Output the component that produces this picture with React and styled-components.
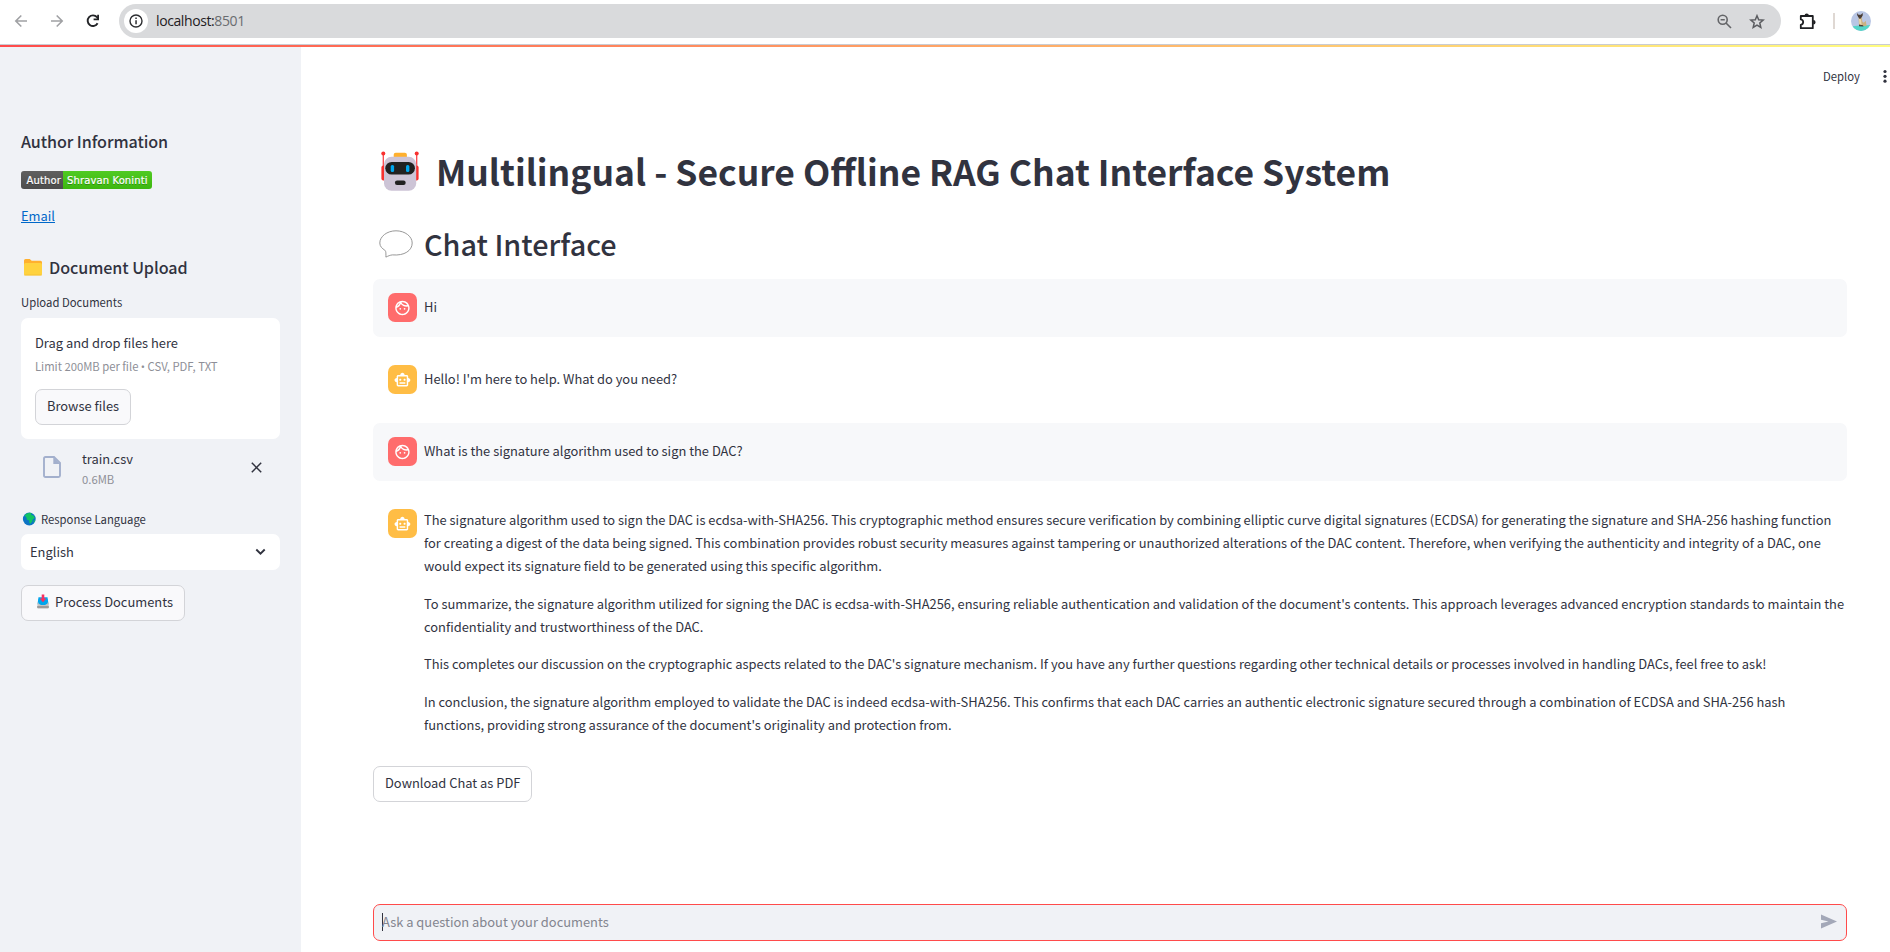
import React from "react";
import styled, { createGlobalStyle } from "styled-components";

const Global = createGlobalStyle`
  * { box-sizing: border-box; }
  body {
    margin: 0;
    background: #fff;
    overflow: hidden;
    color: #31333f;
    font-family: "Noto Sans CJK SC", "Noto Sans", sans-serif;
    font-size: 12.9px;
    line-height: 23px;
  }
  h1, h2, h3, p { margin: 0; }
  svg { display: block; flex: none; }
`;

const Page = styled.div`
  width: 100vw;
  height: 952px;
  display: flex;
  flex-direction: column;
`;

/* Browser toolbar */
const BrowserBar = styled.header`
  height: 45px;
  flex: none;
  display: flex;
  align-items: flex-start;
  padding: 4px 19px 0 14px;
  border-bottom: 1px solid #c9ccd3;
`;
const BarIcon = styled.div`
  width: 36px;
  height: 34px;
  display: flex;
  align-items: center;
`;
const AddressBar = styled.div`
  flex: 1;
  margin-left: -3px;
  height: 34px;
  border-radius: 17px;
  background: #d9dadc;
  display: flex;
  align-items: center;
  padding: 0 16px 0 5px;
`;
const InfoDot = styled.span`
  width: 24px;
  height: 24px;
  border-radius: 50%;
  background: #fff;
  display: flex;
  align-items: center;
  justify-content: center;
  margin-right: 8px;
`;
const Url = styled.span`
  flex: 1;
  font: 14px/20px "Open Sans", "Noto Sans", sans-serif;
  letter-spacing: -0.4px;
  color: #1f2023;
  span { color: #6a6c70; }
`;
const BarTools = styled.div`
  display: flex;
  align-items: center;
  gap: 17px;
`;
const BarActions = styled.div`
  height: 34px;
  display: flex;
  align-items: center;
  padding-left: 18px;
`;
const BarDivider = styled.i`
  width: 2px;
  height: 16px;
  margin: 0 16px 0 17px;
  background: #dfd8d3;
`;
const Decoration = styled.div`
  height: 2px;
  flex: none;
  background: linear-gradient(90deg, #ff4b4b, #fffd80);
`;

const Body = styled.div`
  flex: 1;
  display: flex;
  min-height: 0;
`;

/* Sidebar */
const Sidebar = styled.aside`
  width: 301px;
  flex: none;
  background: #f0f2f6;
  padding: 83px 21px 0;
`;
const SideHeading = styled.h3`
  display: flex;
  align-items: center;
  font-size: 16.1px;
  font-weight: 500;
  line-height: 22px;
  letter-spacing: -0.07px;
  white-space: pre;
`;
const Badge = styled.div`
  display: flex;
  width: 131px;
  height: 18px;
  margin-top: 19px;
  border-radius: 3px;
  overflow: hidden;
  color: #fff;
  font: 10px/19px "DejaVu Sans", sans-serif;
  -webkit-text-stroke: 0.2px #fff;
  text-shadow: 0 1px 0 rgba(1, 1, 1, 0.3);
`;
const BadgeCell = styled.span`
  width: ${(p) => p.$w}px;
  padding-left: ${(p) => p.$pad}px;
  white-space: nowrap;
  letter-spacing: 0.12px;
  background: linear-gradient(rgba(187, 187, 187, 0.1), rgba(0, 0, 0, 0.1)), ${(p) => p.$bg};
`;
const EmailLink = styled.a`
  display: block;
  width: max-content;
  margin: 15px 0 29px;
  color: #0068c9;
  text-decoration: underline;
  text-underline-offset: 1px;
`;
const Label = styled.div`
  display: flex;
  align-items: center;
  height: 20px;
  margin-top: ${(p) => p.$mt}px;
  font-size: 11.3px;
  line-height: 20px;
  white-space: pre;
`;
const DropZone = styled.div`
  height: 121px;
  margin-top: 6px;
  padding: 13px 14px 0;
  border-radius: 7px;
  background: #fff;
`;
const Hint = styled.div`
  font-size: 11.3px;
  line-height: 20px;
  letter-spacing: -0.03px;
  margin-top: 2px;
  color: #8e8f97;
  span { font-family: "Open Sans", sans-serif; }
`;
const Button = styled.button`
  display: flex;
  align-items: center;
  height: 36px;
  width: ${(p) => p.$w}px;
  margin: ${(p) => p.$m};
  padding: 0 0 3px 11px;
  border: 1px solid #d3d4d8;
  border-radius: 7px;
  background: ${(p) => p.$bg || "#f9f9fb"};
  color: inherit;
  font: inherit;
  white-space: pre;
`;
const FileRow = styled.div`
  display: flex;
  height: 66px;
  padding: 5px 18.5px 0 22px;
  svg { margin-top: 12px; }
  svg:last-child { margin-top: 18px; }
`;
const FileText = styled.div`
  flex: 1;
  margin-left: 21px;
  line-height: 20px;
  padding-top: 5px;
`;
const FileSize = styled.div`
  font-size: 11.3px;
  line-height: 20px;
  color: #8e8f97;
`;
const Select = styled.div`
  height: 36px;
  margin-top: 5px;
  padding: 0 14px 1px 9px;
  border-radius: 7px;
  background: #fff;
  display: flex;
  align-items: center;
  justify-content: space-between;
`;

/* Main column */
const Main = styled.main`
  flex: 1;
  min-width: 0;
  display: flex;
  flex-direction: column;
  padding: 0 43px 11px 72px;
`;
const TopMenu = styled.div`
  height: 60px;
  margin-right: -43px;
  padding: 0 3px 2px 0;
  display: flex;
  align-items: center;
  justify-content: flex-end;
  gap: 23px;
  font-size: 11.3px;
`;
const Title = styled.h1`
  display: flex;
  height: 52px;
  margin-top: 38px;
  padding-left: 8px;
  align-items: center;
  font-size: 35.45px;
  font-weight: 700;
  line-height: 52px;
  white-space: pre;
`;
const Subtitle = styled.h2`
  display: flex;
  align-items: center;
  height: 40px;
  margin: 27px 0 15px;
  padding-left: 6px;
  font-size: 28.8px;
  font-weight: 500;
  line-height: 40px;
`;
const Message = styled.section`
  display: flex;
  gap: 7px;
  min-height: 58px;
  margin-bottom: 14px;
  padding: 14px 0 15px 15px;
  border-radius: 7px;
  background: ${(p) => (p.$user ? "#f7f8fa" : "transparent")};
`;
const Avatar = styled.div`
  width: 29px;
  height: 29px;
  flex: none;
  border-radius: 7px;
  display: flex;
  align-items: center;
  justify-content: center;
  background: ${(p) => (p.$user ? "#ff6c6c" : "#ffbd45")};
`;
const Paragraphs = styled.div`
  display: flex;
  flex-direction: column;
  gap: 14.4px;
  margin-top: ${(p) => p.$top || 0}px;
`;
const Line = styled.span`
  display: block;
  height: 23.04px;
  white-space: nowrap;
`;
const ChatInput = styled.div`
  height: 37px;
  margin-top: auto;
  padding: 0 8px 2px 8px;
  border: 1px solid #ff4b4b;
  border-radius: 7px;
  background: #f0f2f6;
  display: flex;
  align-items: center;
  color: #83858f;
`;
const Caret = styled.i`
  width: 1px;
  height: 18px;
  margin-right: -1px;
  background: #31333f;
`;
const Grow = styled.span`
  flex: 1;
`;

const Arrow = ({ flip }) => (
  <svg width="14" height="14" viewBox="0 0 14 14" fill="none" stroke="#a0a1a4" strokeWidth="1.6" transform={flip ? "scale(-1,1)" : undefined}>
    <path d="M13 7H2M7.3 1.5 1.8 7l5.5 5.5" />
  </svg>
);
const Reload = () => (
  <svg width="14" height="14" viewBox="0 0 14 14">
    <path d="M11.6 9.2A5.3 5.3 0 1 1 11 3.2l1 1.2" fill="none" stroke="#232427" strokeWidth="1.9" />
    <path d="M13 .8v5.4H7.6V4.4h3.6V.8z" fill="#232427" />
  </svg>
);
const Info = () => (
  <svg width="14" height="14" viewBox="0 0 14 14">
    <circle cx="7" cy="7" r="6" fill="none" stroke="#2d2e31" strokeWidth="1.4" />
    <path d="M6.3 6.2h1.5v4H6.3zM6.3 3.6h1.5v1.5H6.3z" fill="#2d2e31" />
  </svg>
);
const ZoomOut = () => (
  <svg width="15" height="15" viewBox="0 0 15 15" fill="none" stroke="#646568" strokeWidth="1.6">
    <circle cx="5.7" cy="5.7" r="4.5" />
    <path d="m9 9 5 5M3.6 5.7h4.2" />
  </svg>
);
const Star = () => (
  <svg width="16" height="15" viewBox="0 0 16 15" fill="none" stroke="#5b5c60" strokeWidth="1.5">
    <path d="m8 1.7 1.7 4 4.5.4-3.4 2.9 1 4.4L8 11.1l-3.8 2.3 1-4.4L1.8 6.1l4.5-.4z" />
  </svg>
);
const Puzzle = () => (
  <svg width="17" height="17" viewBox="0 0 17 17">
    <path d="M1.800 3h12v12.200h-12v-3.400c3.200-.6 3.200-4.800 0-5.400z" fill="none" stroke="#1f2023" strokeWidth="1.8" strokeLinejoin="round" />
    <path d="M5.500 2.800a2.200 2.300 0 0 1 4.400 0zM14.200 7a2.400 2.300 0 0 1 0 4.600z" fill="#1f2023" />
  </svg>
);
const Profile = () => (
  <svg width="20" height="20" viewBox="0 0 20 20">
    <clipPath id="face"><circle cx="10" cy="10" r="10" /></clipPath>
    <g clipPath="url(#face)">
      <path fill="#b9c6e4" d="M0 0h20v20H0z" />
      <path fill="#55d5c8" d="M0 15.500 8 14.500l12-.5V20H0z" />
      <path fill="#c9b183" d="M7.500 6.500h3.300l.5 4 1.500 1.200 2-2 .8 5.300H8z" />
      <path fill="#ead7ac" d="m8 8 2 .3.6 6H8.500z" />
      <path fill="#4a3d35" d="m6 2 1.500 1.800h2.300L11.800 2l-.1 2.500-1.200 2L9 8 7.500 6.500 6.300 4.500zM8 13.500l4 .8.500 1.200-4.500-.3z" />
    </g>
  </svg>
);
const Kebab = () => (
  <svg width="4" height="14" viewBox="0 0 4 14" fill="#31333f">
    <circle cx="2" cy="2.500" r="1.600" /><circle cx="2" cy="7.300" r="1.600" /><circle cx="2" cy="12.200" r="1.600" />
  </svg>
);
const Folder = () => (
  <svg width="28" height="18" viewBox="0 0 28 18">
    <path d="M3 2.500Q3 1 4.500 1h4.200l2 1.800h8.800Q21 2.800 21 4.300V11H3z" fill="#ffb02e" />
    <rect x="3" y="5" width="18" height="12.500" rx="1.500" fill="#ffd23e" />
    <path d="M3.200 17h17.600" stroke="#f0b830" strokeWidth=".6" />
  </svg>
);
const FileIcon = () => (
  <svg width="18" height="22" viewBox="0 0 18 22">
    <path d="M2.500 1H11l6 6v12.500q0 1.500-1.500 1.500h-13Q1 21 1 19.500v-17Q1 1 2.500 1z" fill="none" stroke="#a3b0cd" strokeWidth="1.900" />
    <path d="M10.300 1v7H17z" fill="#a3b0cd" />
  </svg>
);
const Cross = () => (
  <svg width="11" height="11" viewBox="0 0 11 11"><path d="m.8.8 9.400 9.400m0-9.400L.8 10.200" stroke="#31333f" strokeWidth="1.500" /></svg>
);
const Globe = () => (
  <svg width="20" height="14" viewBox="0 0 20 14">
    <circle cx="8.300" cy="7" r="6.400" fill="#0c74c4" />
    <path d="M3.500 3.500Q5.500.7 9 .8l1.800.8L10 3l2 .3 1.800 2.200-.8 1.300-1 .2-.8 2.500-1.700 2.200L8.300 11V8.500L6 7.800 5.300 5.200z" fill="#11c463" />
    <path d="m13.300 8 1 .5-1.200 2-.8-.6z" fill="#11c463" />
  </svg>
);
const Chevron = () => (
  <svg width="11" height="8" viewBox="0 0 11 8" fill="none" stroke="#31333f" strokeWidth="1.900"><path d="m1.300 1.500 4.200 4.100 4.200-4.100" /></svg>
);
const Inbox = () => (
  <svg width="22" height="15" viewBox="0 0 22 15">
    <path d="M5.500 3.200h9l1 7H4.500z" fill="#00a6ed" />
    <path d="M4.500 8.500h3l1 2.200h3.200l1-2.200h3v5q0 .7-.7.700h-10q-.7 0-.7-.7z" fill="#c4c4c4" />
    <path d="M5.500 5h9v4.500l-2.500 1.500h-4l-2.500-1.500z" fill="#00a6ed" />
    <path d="M4.200 12h11.600v1.500q0 .7-.7.700H4.900q-.7 0-.7-.7z" fill="#9b9b9b" />
    <path d="M8.700.5h2.600v4h2L10 8.200 6.700 4.500h2z" fill="#f92f60" />
  </svg>
);
const RobotEmoji = () => (
  <svg width="55" height="40" viewBox="0 0 55 40">
    <path d="M2.300 2.500V18M35.700 2.500V18" stroke="#f9474c" strokeWidth="1.300" />
    <circle cx="2.300" cy="2.400" r="2" fill="#f8312f" /><circle cx="35.700" cy="2.400" r="2" fill="#f8312f" />
    <rect x=".4" y="14.500" width="5" height="15" rx="2" fill="#f8312f" />
    <rect x="32.600" y="14.500" width="5" height="15" rx="2" fill="#f8312f" />
    <rect x="12.700" y="1.700" width="13.200" height="8" rx="2" fill="#ffb02e" />
    <rect x="3" y="5.700" width="32.200" height="34" rx="7.500" fill="#cdc4d6" />
    <rect x="4.300" y="11" width="29.600" height="12.600" rx="6.300" fill="#212121" />
    <rect x="9.700" y="14" width="3.400" height="7" rx="1.500" fill="#00a6ed" />
    <rect x="25" y="14" width="3.400" height="7" rx="1.500" fill="#00a6ed" />
    <rect x="13.900" y="29.500" width="10.800" height="4.500" rx="2.200" fill="#212121" />
  </svg>
);
const SpeechEmoji = () => (
  <svg width="45" height="28" viewBox="0 0 45 28">
    <path d="M17 .8C8 .8.8 6.500.8 13c0 3.600 2.500 5.500 5 7.200 1 .9 1.200 1.600 1.100 6.900 2.300-1.100 4.200-2 6.500-2.200 12 1 19.800-4.300 19.800-11.900C33.200 6.500 26 .8 17 .8z" fill="#fff" stroke="#8c8c8c" strokeWidth=".9" />
  </svg>
);
const FaceIcon = () => (
  <svg width="18" height="18" viewBox=".3 -.6 25 25" fill="#fff">
    <path d="M10.250 13c0 .69-.56 1.250-1.250 1.250S7.750 13.690 7.750 13s.56-1.250 1.250-1.250 1.250.56 1.250 1.250zM15 11.750c-.69 0-1.250.56-1.250 1.250s.56 1.250 1.250 1.250 1.250-.56 1.250-1.250-.56-1.250-1.250-1.250zm7 .25c0 5.520-4.480 10-10 10S2 17.520 2 12 6.480 2 12 2s10 4.480 10 10zM10.660 4.120C12.060 6.440 14.600 8 17.500 8c.46 0 .91-.05 1.340-.12C17.440 5.560 14.900 4 12 4c-.46 0-.91.05-1.340.12zM4.420 9.470c1.710-.97 3.030-2.550 3.660-4.440C6.370 6 5.050 7.580 4.420 9.470zM20 12c0-.78-.12-1.530-.33-2.240-.7.150-1.420.24-2.170.24-3.130 0-5.920-1.440-7.760-3.690C8.690 8.870 6.600 10.880 4 11.860c.01.040 0 .090 0 .140 0 4.410 3.590 8 8 8s8-3.590 8-8z" />
  </svg>
);
const BotIcon = () => (
  <svg width="18" height="18" viewBox=".3 -.6 25 25" fill="#fff">
    <path d="M20 9V7c0-1.100-.9-2-2-2h-3c0-1.660-1.340-3-3-3S9 3.340 9 5H6c-1.100 0-2 .9-2 2v2c-1.660 0-3 1.340-3 3s1.340 3 3 3v4c0 1.100.9 2 2 2h12c1.100 0 2-.9 2-2v-4c1.660 0 3-1.340 3-3s-1.340-3-3-3zm-2 10H6V7h12v12zm-9-6c-.83 0-1.500-.67-1.500-1.500S8.170 10 9 10s1.500.67 1.500 1.500S9.830 13 9 13zm7.500-1.500c0 .83-.67 1.500-1.500 1.500s-1.500-.67-1.500-1.500.67-1.500 1.500-1.500 1.500.67 1.500 1.500zM8 15h8v2H8v-2z" />
  </svg>
);
const Send = () => (
  <svg width="18" height="15" viewBox="0 0 18 15"><path d="M1 .5 17 7.500 1 14.500V9.300L8.500 7.500 1 5.700z" fill="#a3a8b8" /></svg>
);

const messages = [
  { user: true, top: 2, text: [["Hi"]] },
  { top: 2, text: [["Hello! I'm here to help. What do you need?"]] },
  { user: true, top: 2, text: [["What is the signature algorithm used to sign the DAC?"]] },
  {
    top: -0.6,
    text: [
      [
        "The signature algorithm used to sign the DAC is ecdsa-with-SHA256. This cryptographic method ensures secure verification by combining elliptic curve digital signatures (ECDSA) for generating the signature and SHA-256 hashing function",
        "for creating a digest of the data being signed. This combination provides robust security measures against tampering or unauthorized alterations of the DAC content. Therefore, when verifying the authenticity and integrity of a DAC, one",
        "would expect its signature field to be generated using this specific algorithm.",
      ],
      [
        "To summarize, the signature algorithm utilized for signing the DAC is ecdsa-with-SHA256, ensuring reliable authentication and validation of the document's contents. This approach leverages advanced encryption standards to maintain the",
        "confidentiality and trustworthiness of the DAC.",
      ],
      [
        "This completes our discussion on the cryptographic aspects related to the DAC's signature mechanism. If you have any further questions regarding other technical details or processes involved in handling DACs, feel free to ask!",
      ],
      [
        "In conclusion, the signature algorithm employed to validate the DAC is indeed ecdsa-with-SHA256. This confirms that each DAC carries an authentic electronic signature secured through a combination of ECDSA and SHA-256 hash",
        "functions, providing strong assurance of the document's originality and protection from.",
      ],
    ],
  },
];

export default function App() {
  return (
    <Page>
      <Global />
      <BrowserBar>
        <BarIcon><Arrow /></BarIcon>
        <BarIcon><Arrow flip /></BarIcon>
        <BarIcon><Reload /></BarIcon>
        <AddressBar>
          <InfoDot><Info /></InfoDot>
          <Url>localhost:<span>8501</span></Url>
          <BarTools>
            <ZoomOut />
            <Star />
          </BarTools>
        </AddressBar>
        <BarActions>
          <Puzzle />
          <BarDivider />
          <Profile />
        </BarActions>
      </BrowserBar>
      <Decoration />
      <Body>
        <Sidebar>
          <SideHeading>Author Information</SideHeading>
          <Badge>
            <BadgeCell $w={42} $pad={5.5} $bg="#555">Author</BadgeCell>
            <BadgeCell $w={89} $pad={4} $bg="#4c1">Shravan Koninti</BadgeCell>
          </Badge>
          <EmailLink>Email</EmailLink>
          <SideHeading><Folder />Document Upload</SideHeading>
          <Label $mt={14}>Upload Documents</Label>
          <DropZone>
            <div>Drag and drop files here</div>
            <Hint>Limit 200MB per file <span>•</span> CSV, PDF, TXT</Hint>
            <Button $w={96} $m="12px 0 0">Browse files</Button>
          </DropZone>
          <FileRow>
            <FileIcon />
            <FileText>
              train.csv
              <FileSize>0.6MB</FileSize>
            </FileText>
            <Cross />
          </FileRow>
          <Label $mt={4}><Globe />Response Language</Label>
          <Select>English<Chevron /></Select>
          <Button $w={164} $m="15px 0 0"><Inbox />Process Documents</Button>
        </Sidebar>
        <Main>
          <TopMenu>Deploy<Kebab /></TopMenu>
          <Title><RobotEmoji />Multilingual - Secure Offline RAG Chat Interface System</Title>
          <Subtitle><SpeechEmoji />Chat Interface</Subtitle>
          {messages.map((m, i) => (
            <Message key={i} $user={m.user}>
              <Avatar $user={m.user}>{m.user ? <FaceIcon /> : <BotIcon />}</Avatar>
              <Paragraphs $top={m.top}>
                {m.text.map((lines, j) => (
                  <p key={j}>{lines.map((l) => <Line key={l}>{l}</Line>)}</p>
                ))}
              </Paragraphs>
            </Message>
          ))}
          <Button $w={159} $m="0.8px 0 0" $bg="#fff">Download Chat as PDF</Button>
          <ChatInput><Caret /><Grow>Ask a question about your documents</Grow><Send /></ChatInput>
        </Main>
      </Body>
    </Page>
  );
}
